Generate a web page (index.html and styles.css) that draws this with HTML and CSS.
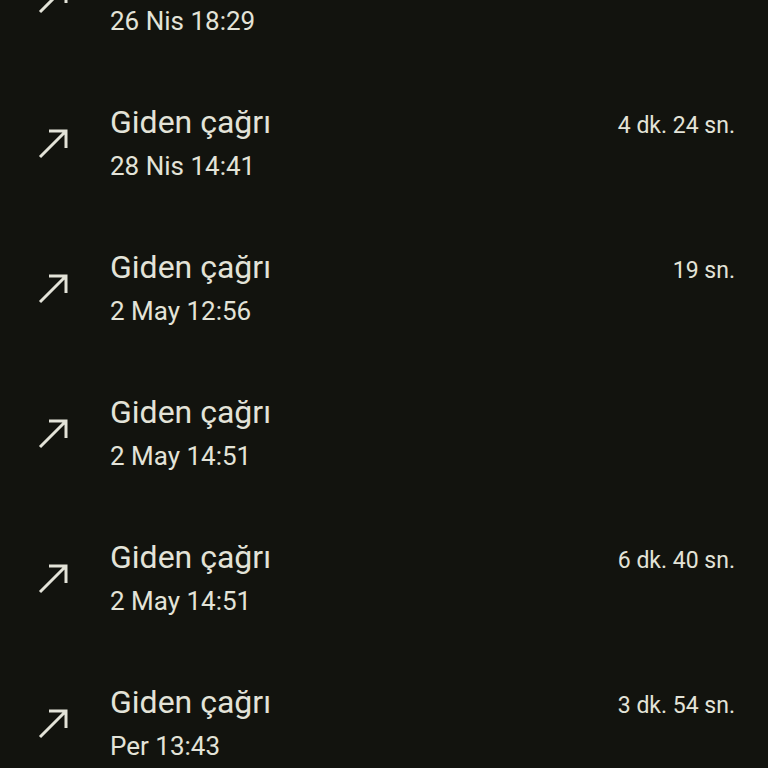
FILE: index.html
```html
<!DOCTYPE html>
<html lang="tr">
<head>
    <meta charset="UTF-8">
    <meta name="viewport" content="width=device-width, initial-scale=1.0">
    <title>Arama geçmişi</title>
    <link rel="stylesheet" href="styles.css">
</head>
<body>

<div class="call-list">
    <div class="call-row">
        <div class="call-icon">
            <svg width="40" height="40" viewBox="0 0 40 40"><path d="M6 34 L32 8 M15 8 H32 V25" fill="none" stroke="#e3e3d8" stroke-width="3"/></svg>
        </div>
        <div class="call-info">
            <div class="call-top">
                <span class="call-title">Giden çağrı</span>
                <span class="call-duration"></span>
            </div>
            <div class="call-date">26 Nis 18:29</div>
        </div>
    </div>

    <div class="call-row">
        <div class="call-icon">
            <svg width="40" height="40" viewBox="0 0 40 40"><path d="M6 34 L32 8 M15 8 H32 V25" fill="none" stroke="#e3e3d8" stroke-width="3"/></svg>
        </div>
        <div class="call-info">
            <div class="call-top">
                <span class="call-title">Giden çağrı</span>
                <span class="call-duration">4 dk. 24 sn.</span>
            </div>
            <div class="call-date">28 Nis 14:41</div>
        </div>
    </div>

    <div class="call-row">
        <div class="call-icon">
            <svg width="40" height="40" viewBox="0 0 40 40"><path d="M6 34 L32 8 M15 8 H32 V25" fill="none" stroke="#e3e3d8" stroke-width="3"/></svg>
        </div>
        <div class="call-info">
            <div class="call-top">
                <span class="call-title">Giden çağrı</span>
                <span class="call-duration">19 sn.</span>
            </div>
            <div class="call-date">2 May 12:56</div>
        </div>
    </div>

    <div class="call-row">
        <div class="call-icon">
            <svg width="40" height="40" viewBox="0 0 40 40"><path d="M6 34 L32 8 M15 8 H32 V25" fill="none" stroke="#e3e3d8" stroke-width="3"/></svg>
        </div>
        <div class="call-info">
            <div class="call-top">
                <span class="call-title">Giden çağrı</span>
                <span class="call-duration"></span>
            </div>
            <div class="call-date">2 May 14:51</div>
        </div>
    </div>

    <div class="call-row">
        <div class="call-icon">
            <svg width="40" height="40" viewBox="0 0 40 40"><path d="M6 34 L32 8 M15 8 H32 V25" fill="none" stroke="#e3e3d8" stroke-width="3"/></svg>
        </div>
        <div class="call-info">
            <div class="call-top">
                <span class="call-title">Giden çağrı</span>
                <span class="call-duration">6 dk. 40 sn.</span>
            </div>
            <div class="call-date">2 May 14:51</div>
        </div>
    </div>

    <div class="call-row">
        <div class="call-icon">
            <svg width="40" height="40" viewBox="0 0 40 40"><path d="M6 34 L32 8 M15 8 H32 V25" fill="none" stroke="#e3e3d8" stroke-width="3"/></svg>
        </div>
        <div class="call-info">
            <div class="call-top">
                <span class="call-title">Giden çağrı</span>
                <span class="call-duration">3 dk. 54 sn.</span>
            </div>
            <div class="call-date">Per 13:43</div>
        </div>
    </div>
</div>

</body>
</html>
```

FILE: styles.css
```css
html, body {
    margin: 0;
    padding: 0;
    background-color: #12130e;
    height: 100%;
    overflow: hidden;
}
body {
    font-family: Roboto, "Noto Sans", sans-serif;
    color: #e3e3d8;
}
.call-list {
    margin-top: -74px;
}
.call-row {
    display: flex;
    align-items: center;
    height: 145px;
    padding: 0 33px 0 34px;
}
.call-icon {
    width: 76px;
    flex-shrink: 0;
    display: flex;
    align-items: center;
}
.call-icon svg {
    display: block;
    margin-top: -2px;
}
.call-info {
    flex: 1;
}
.call-top {
    display: flex;
    justify-content: space-between;
    align-items: baseline;
    height: 44px;
    line-height: 44px;
}
.call-title {
    font-size: 32px;
}
.call-duration {
    font-size: 23px;
}
.call-date {
    font-size: 26px;
    line-height: 44px;
}
```
